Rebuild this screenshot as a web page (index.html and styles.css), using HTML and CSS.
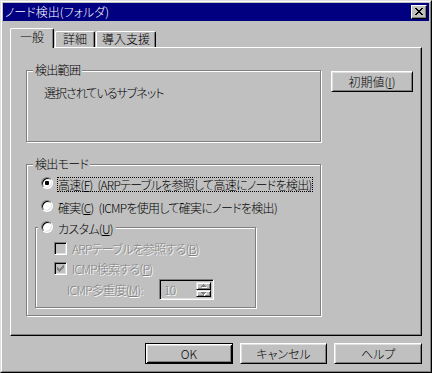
FILE: index.html
```html
<!DOCTYPE html>
<html lang="ja">
<head>
<meta charset="utf-8">
<title>ノード検出(フォルダ)</title>
<link rel="stylesheet" href="styles.css">
</head>
<body>
<div class="window">
  <div class="frame">
    <div class="titlebar">
      <span class="title">ノード検出(フォルダ)</span>
      <span class="close">
        <svg width="16" height="14" viewBox="0 0 16 14" shape-rendering="crispEdges">
          <g fill="#000">
            <rect x="4" y="3" width="2" height="1"/><rect x="10" y="3" width="2" height="1"/>
            <rect x="5" y="4" width="2" height="1"/><rect x="9" y="4" width="2" height="1"/>
            <rect x="6" y="5" width="4" height="1"/>
            <rect x="7" y="6" width="2" height="1"/>
            <rect x="6" y="7" width="4" height="1"/>
            <rect x="5" y="8" width="2" height="1"/><rect x="9" y="8" width="2" height="1"/>
            <rect x="4" y="9" width="2" height="1"/><rect x="10" y="9" width="2" height="1"/>
          </g>
        </svg>
      </span>
    </div>
    <div class="content">
      <div class="tabs">
        <div class="tab active">一般</div>
        <div class="tab t2">詳細</div>
        <div class="tab t3">導入支援</div>
      </div>
      <div class="panel">
        <div class="row-top">
          <div class="group g-range">
            <span class="legend">検出範囲</span>
            <div class="range-text">選択されているサブネット</div>
          </div>
          <div class="btn btn-init">初期値(<u>I</u>)</div>
        </div>
        <div class="group g-mode">
          <span class="legend">検出モード</span>
          <div class="radio-row r1"><span class="radio checked"></span><span class="rlabel focus">高速(<u>F</u>) (ARPテーブルを参照して高速にノードを検出)</span></div>
          <div class="radio-row r2"><span class="radio"></span><span class="rlabel">確実(<u>C</u>) (ICMPを使用して確実にノードを検出)</span></div>
          <div class="group g-custom">
            <span class="legend legend-radio"><span class="radio"></span><span class="rlabel">カスタム(<u>U</u>)</span></span>
            <div class="check-row c1"><span class="check"></span><span class="dis">ARPテーブルを参照する(<u>B</u>)</span></div>
            <div class="check-row c2"><span class="check">
              <svg width="7" height="7" viewBox="0 0 7 7" shape-rendering="crispEdges">
                <g fill="#808080">
                  <rect x="6" y="0" width="1" height="1"/>
                  <rect x="5" y="1" width="2" height="1"/>
                  <rect x="0" y="2" width="1" height="1"/><rect x="4" y="2" width="3" height="1"/>
                  <rect x="0" y="3" width="2" height="1"/><rect x="3" y="3" width="3" height="1"/>
                  <rect x="0" y="4" width="5" height="1"/>
                  <rect x="1" y="5" width="3" height="1"/>
                  <rect x="2" y="6" width="1" height="1"/>
                </g>
              </svg></span><span class="dis">ICMP検索する(<u>P</u>)</span></div>
            <div class="spin-row">
              <span class="dis spin-label">ICMP多重度(<u>M</u>):</span>
              <div class="spinbox">
                <span class="dis val">10</span>
                <div class="spin">
                  <span class="sbtn"><svg width="5" height="3" viewBox="0 0 5 3" shape-rendering="crispEdges"><g fill="#808080"><rect x="2" y="0" width="1" height="1"/><rect x="1" y="1" width="3" height="1"/><rect x="0" y="2" width="5" height="1"/></g></svg></span>
                  <span class="sbtn"><svg width="5" height="3" viewBox="0 0 5 3" shape-rendering="crispEdges"><g fill="#808080"><rect x="0" y="0" width="5" height="1"/><rect x="1" y="1" width="3" height="1"/><rect x="2" y="2" width="1" height="1"/></g></svg></span>
                </div>
              </div>
            </div>
          </div>
        </div>
      </div>
      <div class="buttons">
        <div class="btn default">OK</div>
        <div class="btn">キャンセル</div>
        <div class="btn">ヘルプ</div>
      </div>
    </div>
  </div>
</div>
</body>
</html>
```

FILE: styles.css
```css
* { box-sizing: border-box; }
html, body { margin: 0; padding: 0; }
body {
  background: #c0c0c0;
  font-family: "Noto Sans CJK JP", "Noto Sans", sans-serif;
  font-size: 12px;
  font-weight: 300;
  font-feature-settings: "palt";
  letter-spacing: -0.7px;
  color: #000;
}
u { text-decoration: underline; text-underline-offset: 1px; }

.window {
  width: 432px;
  height: 373px;
  border: 1px solid;
  border-color: #dfdfdf #000 #000 #dfdfdf;
  background: #c0c0c0;
}
.frame {
  height: 100%;
  border: 1px solid;
  border-color: #fff #808080 #808080 #fff;
  padding: 1px;
}
.titlebar {
  height: 18px;
  background: #000080;
  color: #fff;
  display: flex;
  align-items: center;
  justify-content: space-between;
  padding: 0 2px 0 2px;
}
.title { line-height: 14px; letter-spacing: 0; }
.close {
  width: 16px;
  height: 14px;
  background: #c0c0c0;
  border: 1px solid;
  border-color: #fff #000 #000 #fff;
  box-shadow: inset -1px -1px 0 #808080;
}
.close svg { display: block; margin: -1px 0 0 -1px; }

.content { padding: 7px 7px 0 7px; }

.tabs {
  display: flex;
  align-items: flex-end;
  height: 19px;
}
.tab {
  height: 16px;
  border-top: 1px solid #fff;
  border-left: 1px solid #fff;
  border-right: 1px solid #000;
  border-radius: 2px 2px 0 0;
  box-shadow: inset -1px 0 0 #808080;
  background: #c0c0c0;
  display: flex;
  align-items: center;
  justify-content: center;
  line-height: 14px;
  padding-bottom: 1px;
  margin-left: 1px;
  letter-spacing: 0;
}
.tab.active {
  width: 44px;
  height: 20px;
  margin-left: 0;
  margin-bottom: -1px;
  padding-bottom: 3px;
  position: relative;
  z-index: 1;
}
.t2 { width: 40px; }
.t3 { width: 60px; }

.panel {
  height: 289px;
  border: 1px solid;
  border-color: #fff #000 #000 #fff;
  box-shadow: inset -1px -1px 0 #808080;
  padding: 22px 0 0 15px;
}

.row-top { display: flex; align-items: flex-start; }

.group {
  position: relative;
  border: 1px solid #808080;
  box-shadow: 1px 1px 0 #fff, inset 1px 1px 0 #fff;
}
.legend {
  position: absolute;
  top: -8px;
  left: 6px;
  padding: 0 2px;
  background: #c0c0c0;
  line-height: 14px;
}
.g-range {
  width: 295px;
  height: 72px;
  padding: 15px 0 0 17px;
}
.range-text { line-height: 14px; letter-spacing: -1px; }

.btn {
  width: 88px;
  height: 21px;
  border: 1px solid;
  border-color: #fff #000 #000 #fff;
  box-shadow: inset 1px 1px 0 #dfdfdf, inset -1px -1px 0 #808080;
  display: flex;
  align-items: center;
  justify-content: center;
  line-height: 14px;
  letter-spacing: 0;
}
.btn.default {
  border-color: #000;
  box-shadow: inset 1px 1px 0 #fff, inset -1px -1px 0 #000, inset 2px 2px 0 #dfdfdf, inset -2px -2px 0 #808080;
}
.btn-init {
  width: 82px;
  margin: 1px 0 0 10px;
}

.g-mode {
  width: 295px;
  height: 152px;
  margin-top: 22px;
  padding: 12px 0 0 8px;
}
.radio-row {
  display: flex;
  align-items: flex-start;
  padding-left: 6px;
}
.r2 { margin-top: 8px; }
.radio {
  flex: none;
  width: 12px;
  height: 12px;
  border-radius: 50%;
  border: 1px solid;
  border-color: #808080 #fff #fff #808080;
  background: #fff;
  box-shadow: inset 1px 1px 0 #000, inset -1px -1px 0 #dfdfdf;
  display: flex;
  align-items: center;
  justify-content: center;
  margin-right: 4px;
}
.radio.checked::after {
  content: "";
  width: 4px;
  height: 4px;
  background: #000;
  border-radius: 1px;
}
.rlabel {
  border: 1px solid transparent;
  line-height: 13px;
  white-space: nowrap;
  word-spacing: 3px;
}
.rlabel.focus { border: 1px dotted #000; }

.g-custom {
  width: 221px;
  height: 81px;
  margin-top: 12px;
  padding: 14px 0 0 18px;
}
.legend-radio {
  display: flex;
  align-items: flex-start;
  left: 2px;
  top: -7px;
  padding: 0 2px 0 3px;
  line-height: 13px;
}
.check-row {
  display: flex;
  align-items: center;
  height: 13px;
}
.c2 { margin-top: 7px; }
.check {
  flex: none;
  width: 13px;
  height: 13px;
  border: 1px solid;
  border-color: #808080 #fff #fff #808080;
  box-shadow: inset 1px 1px 0 #000, inset -1px -1px 0 #dfdfdf;
  background: #c0c0c0;
  margin-right: 5px;
  padding: 2px 0 0 2px;
}
.check svg { display: block; }
.dis {
  color: #808080;
  text-shadow: 1px 1px 0 #fff;
  line-height: 13px;
  white-space: nowrap;
}
.spin-row {
  display: flex;
  align-items: center;
  height: 21px;
  margin-top: 4px;
  padding-left: 13px;
}
.spin-label { width: 92px; }
.spinbox {
  width: 55px;
  height: 21px;
  border: 1px solid;
  border-color: #808080 #fff #fff #808080;
  box-shadow: inset 1px 1px 0 #000, inset -1px -1px 0 #dfdfdf;
  padding: 2px 2px 2px 4px;
  display: flex;
  align-items: stretch;
  justify-content: space-between;
}
.val { display: flex; align-items: center; }
.spin {
  width: 15px;
  display: flex;
  flex-direction: column;
}
.sbtn {
  flex: 1;
  border: 1px solid;
  border-color: #dfdfdf #000 #000 #dfdfdf;
  box-shadow: inset 1px 1px 0 #fff, inset -1px -1px 0 #808080;
  display: flex;
  align-items: center;
  justify-content: center;
}
.sbtn svg { display: block; filter: drop-shadow(1px 1px 0 #fff); }

.buttons {
  display: flex;
  gap: 7px;
  margin: 7px 0 0 135px;
}
```
